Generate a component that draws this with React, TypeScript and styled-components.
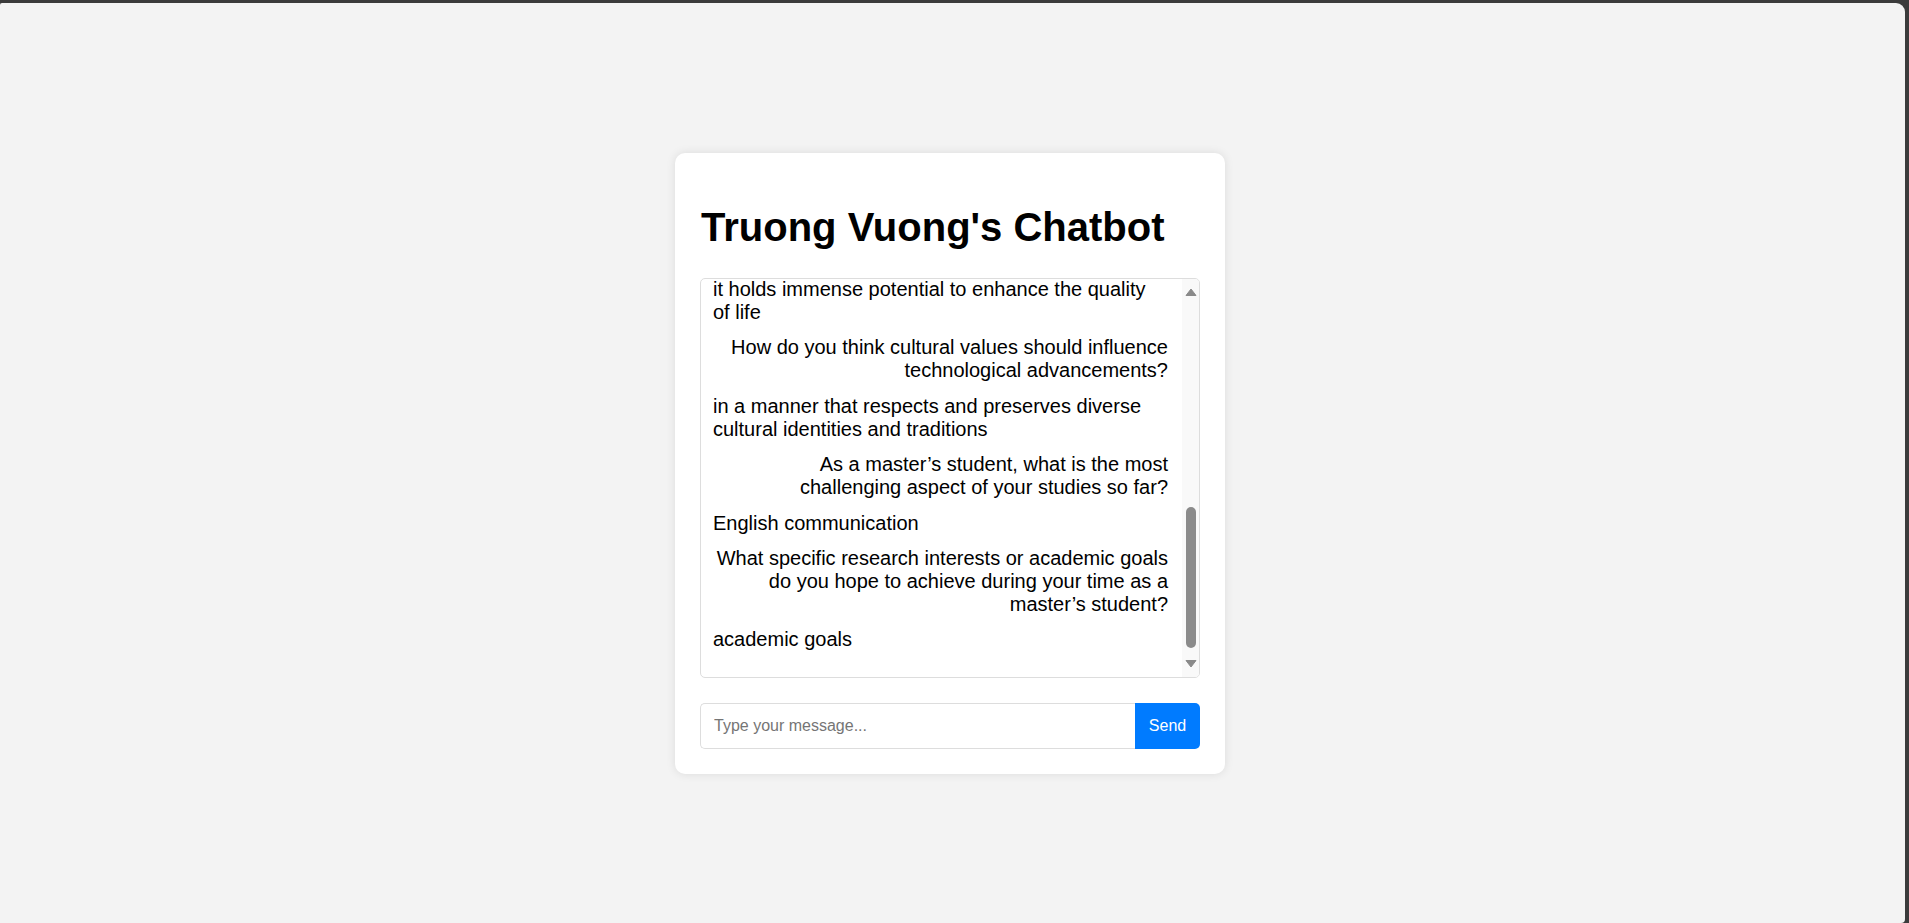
import React, { useLayoutEffect, useRef } from "react";
import styled, { createGlobalStyle } from "styled-components";

const GlobalStyle = createGlobalStyle`
  html, body {
    margin: 0;
    padding: 0;
    height: 100%;
    background: #3b3b3b;
    overflow: hidden;
  }
  #root {
    height: 100%;
  }
  * {
    box-sizing: border-box;
  }
`;

const Frame = styled.div`
  height: 100%;
  padding-top: 3px;
  padding-right: 4px;
`;

const Page = styled.main`
  height: 100%;
  background: #f3f3f3;
  border-radius: 2px 9px 4px 0;
  display: flex;
  align-items: center;
  justify-content: center;
  padding-right: 5px;
  font-family: "Liberation Sans", Arial, sans-serif;
`;

const Card = styled.section`
  width: 550px;
  background: #ffffff;
  border-radius: 10px;
  padding: 25px;
  box-shadow: 0 0 10px rgba(0, 0, 0, 0.1);
`;

const Title = styled.h1`
  font-size: 40px;
  font-weight: 700;
  margin: 27px 0 28px 1px;
  color: #000;
`;

const ChatFrame = styled.div`
  position: relative;
  height: 400px;
  border: 1px solid #ddd;
  border-radius: 5px;
  overflow: hidden;
  margin-bottom: 25px;
`;

const ChatScroll = styled.div`
  height: 100%;
  overflow-y: scroll;
  scrollbar-width: none;
  padding: 10px 31px 12.8px 12px;
  &::-webkit-scrollbar {
    display: none;
  }
`;

const Message = styled.div<{ $user?: boolean }>`
  font-size: 20px;
  color: #000;
  margin-bottom: 12.4px;
  margin-right: ${(p) => (p.$user ? "0" : "4px")};
  text-align: ${(p) => (p.$user ? "right" : "left")};
`;

const ScrollTrack = styled.div`
  position: absolute;
  top: 0;
  right: 0;
  bottom: 0;
  width: 17px;
  background: #f9f9f9;
  display: flex;
  flex-direction: column;
`;

const ArrowButton = styled.div<{ $h: number }>`
  height: ${(p) => p.$h}px;
  display: flex;
  align-items: center;
  justify-content: center;
  flex: none;
`;

const ThumbArea = styled.div`
  flex: 1;
  display: flex;
  align-items: flex-end;
  justify-content: center;
  padding-bottom: 3px;
`;

const Thumb = styled.div`
  width: 10px;
  height: 141px;
  border-radius: 5px;
  background: #8b8b8b;
`;

const InputRow = styled.form`
  display: flex;
  height: 46px;
`;

const TextInput = styled.input`
  flex: 1;
  min-width: 0;
  border: 1px solid #ddd;
  border-right: none;
  border-radius: 5px 0 0 5px;
  padding: 0 13px;
  font-family: "Liberation Sans", Arial, sans-serif;
  font-size: 16px;
  color: #000;
  outline: none;
  &::placeholder {
    color: #757575;
  }
`;

const SendButton = styled.button`
  width: 65px;
  border: none;
  border-radius: 0 5px 5px 0;
  background: #007bff;
  color: #fff;
  font-family: "Liberation Sans", Arial, sans-serif;
  font-size: 16px;
  cursor: pointer;
  padding: 0;
`;

const Arrow = ({ down }: { down?: boolean }) => (
  <svg width="12" height="9" viewBox="0 0 12 9">
    <polygon
      points={down ? "1,1.5 11,1.5 6,8" : "1,7.5 11,7.5 6,1"}
      fill="#8a8a8a"
      stroke="#8a8a8a"
      strokeWidth="1"
      strokeLinejoin="round"
    />
  </svg>
);

const messages: { text: string; user: boolean }[] = [
  { text: "Hello! Who are you?", user: true },
  { text: "I am Truong Vuong", user: false },
  { text: "Nice to meet you! What are you currently studying?", user: true },
  { text: "I am a master's student in computer science", user: false },
  { text: "What made you choose that field of study?", user: true },
  { text: "technology is changing the world", user: false },
  { text: "Which area of technology interests you the most right now?", user: true },
  { text: "artificial intelligence", user: false },
  { text: "How do you think artificial intelligence will affect everyday life?", user: true },
  { text: "it holds immense potential to enhance the quality of life", user: false },
  { text: "How do you think cultural values should influence technological advancements?", user: true },
  { text: "in a manner that respects and preserves diverse cultural identities and traditions", user: false },
  { text: "As a master\u2019s student, what is the most challenging aspect of your studies so far?", user: true },
  { text: "English communication", user: false },
  { text: "What specific research interests or academic goals do you hope to achieve during your time as a master\u2019s student?", user: true },
  { text: "academic goals", user: false },
];

export default function App() {
  const boxRef = useRef<HTMLDivElement>(null);
  useLayoutEffect(() => {
    const el = boxRef.current;
    if (el) el.scrollTop = el.scrollHeight;
  }, []);
  return (
    <>
      <GlobalStyle />
      <Frame>
        <Page>
          <Card>
            <Title>Truong Vuong's Chatbot</Title>
            <ChatFrame>
              <ChatScroll ref={boxRef}>
                {messages.map((m, i) => (
                  <Message key={i} $user={m.user}>
                    {m.text}
                  </Message>
                ))}
              </ChatScroll>
              <ScrollTrack aria-hidden="true">
                <ArrowButton $h={28}>
                  <Arrow />
                </ArrowButton>
                <ThumbArea>
                  <Thumb />
                </ThumbArea>
                <ArrowButton $h={26}>
                  <Arrow down />
                </ArrowButton>
              </ScrollTrack>
            </ChatFrame>
            <InputRow onSubmit={(e) => e.preventDefault()}>
              <TextInput type="text" placeholder="Type your message..." />
              <SendButton type="submit">Send</SendButton>
            </InputRow>
          </Card>
        </Page>
      </Frame>
    </>
  );
}
